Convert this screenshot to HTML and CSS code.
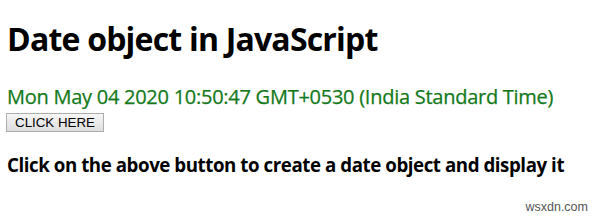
FILE: index.html
```html
<!DOCTYPE html>
<html lang="en">
<head>
    <meta charset="UTF-8">
    <title>Date object in JavaScript</title>
    <link rel="stylesheet" href="styles.css">
</head>
<body>
    <h1>Date object in JavaScript</h1>
    <div class="result">Mon May 04 2020 10:50:47 GMT+0530 (India Standard Time)</div>
    <button class="btn">CLICK HERE</button>
    <h3>Click on the above button to create a date object and display it</h3>
    <span class="watermark">wsxdn.com</span>
</body>
</html>
```

FILE: styles.css
```css
body {
    font-family: "Open Sans", sans-serif;
    margin: 0;
    padding: 20px 8px 0 7px;
    background: #fff;
    color: #000;
    position: relative;
    height: 221px;
    box-sizing: border-box;
}
h1 {
    font-size: 32px;
    line-height: 38px;
    letter-spacing: -0.8px;
    margin: 0;
}
.result {
    color: #13791a;
    font-size: 20px;
    line-height: 24px;
    letter-spacing: -0.26px;
    margin-top: 27px;
    -webkit-text-stroke: 0.25px #13791a;
}
.btn {
    display: block;
    margin: 4px 0 0 -1px;
    font-family: "Liberation Sans", Arial, sans-serif;
    font-size: 13.33px;
    padding: 1px 8px;
    border: 1px solid #adadad;
    border-radius: 0;
    background: linear-gradient(#f6f6f6, #dedede);
    color: #000;
    height: 19px;
    line-height: 15px;
}
h3 {
    font-size: 18.72px;
    line-height: 24px;
    letter-spacing: -0.44px;
    white-space: nowrap;
    margin: 21px 0 0 0;
}
.watermark {
    position: absolute;
    right: 12px;
    bottom: 7px;
    font-family: "Liberation Sans", Arial, sans-serif;
    font-size: 12.5px;
    color: #555;
}
```
